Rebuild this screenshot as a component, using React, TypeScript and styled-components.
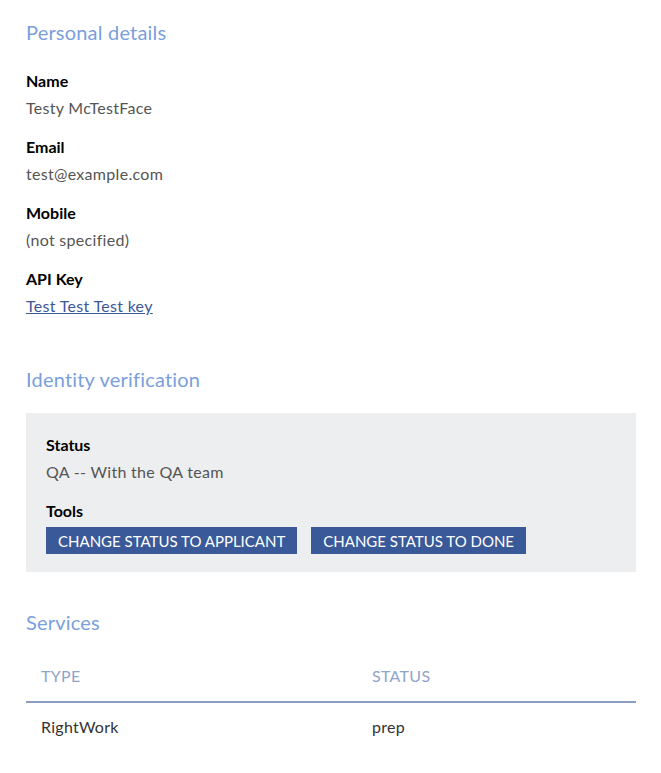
import React from 'react';
import styled, { createGlobalStyle } from 'styled-components';

const GlobalStyle = createGlobalStyle`
    body {
        margin: 0;
        background: #fff;
        font-family: Lato, "Open Sans", sans-serif;
        color: #555;
    }
`;

const Page = styled.div`
    padding: 20px 25px 40px 26px;
`;

const Section = styled.section<{ gapAfter?: number }>`
    margin-bottom: ${(p) => p.gapAfter ?? 0}px;
`;

const SectionTitle = styled.h2<{ spaceBelow: number }>`
    margin: 0 0 ${(p) => p.spaceBelow}px;
    font-size: 20px;
    line-height: 24px;
    font-weight: 400;
    letter-spacing: 0.2px;
    color: #7a9fdb;
`;

const Field = styled.div`
    margin-bottom: 12px;
`;

const Label = styled.div`
    font-size: 16px;
    line-height: 27px;
    font-weight: 700;
    color: #000;
`;

const Value = styled.div`
    font-size: 16px;
    line-height: 27px;
    letter-spacing: 0.3px;
    color: #555;
`;

const ValueLink = styled.a`
    font-size: 16px;
    line-height: 27px;
    letter-spacing: 0.3px;
    color: #3b5998;
    text-decoration: underline;
`;

const Panel = styled.div`
    background: #edeef0;
    padding: 18px 20px 18px;
`;

const ToolsRow = styled.div`
    display: flex;
    gap: 14px;
    margin-top: 3px;
`;

const Button = styled.button`
    height: 27px;
    padding: 0 12px;
    border: none;
    background: #3a5998;
    color: #fff;
    font-family: inherit;
    font-size: 15px;
    text-transform: uppercase;
    cursor: pointer;
`;

const Table = styled.table`
    width: 100%;
    margin-top: 16px;
    border-collapse: collapse;
    table-layout: fixed;
`;

const Th = styled.th<{ w?: number }>`
    width: ${(p) => (p.w ? `${p.w}px` : 'auto')};
    padding: 14px 15px 13px;
    text-align: left;
    font-size: 16px;
    line-height: 24px;
    font-weight: 400;
    text-transform: uppercase;
    letter-spacing: 0.3px;
    color: #8fa3cb;
    border-bottom: 2px solid #8a9dc2;
`;

const Td = styled.td`
    padding: 12px 15px;
    font-size: 16px;
    line-height: 24px;
    letter-spacing: 0.3px;
    color: #333;
`;

const personal = [
    { label: 'Name', value: 'Testy McTestFace' },
    { label: 'Email', value: 'test@example.com' },
    { label: 'Mobile', value: '(not specified)' },
];

export default function App() {
    return (
        <Page>
            <GlobalStyle />
            <Section gapAfter={48}>
                <SectionTitle spaceBelow={23}>Personal details</SectionTitle>
                {personal.map((f) => (
                    <Field key={f.label}>
                        <Label>{f.label}</Label>
                        <Value>{f.value}</Value>
                    </Field>
                ))}
                <Field>
                    <Label>API Key</Label>
                    <ValueLink href="#">Test Test Test key</ValueLink>
                </Field>
            </Section>

            <Section gapAfter={38}>
                <SectionTitle spaceBelow={22}>Identity verification</SectionTitle>
                <Panel>
                    <Field>
                        <Label>Status</Label>
                        <Value>QA -- With the QA team</Value>
                    </Field>
                    <Label>Tools</Label>
                    <ToolsRow>
                        <Button>Change status to applicant</Button>
                        <Button>Change status to done</Button>
                    </ToolsRow>
                </Panel>
            </Section>

            <Section>
                <SectionTitle spaceBelow={0}>Services</SectionTitle>
                <Table>
                    <thead>
                        <tr>
                            <Th w={301}>Type</Th>
                            <Th>Status</Th>
                        </tr>
                    </thead>
                    <tbody>
                        <tr>
                            <Td>RightWork</Td>
                            <Td>prep</Td>
                        </tr>
                    </tbody>
                </Table>
            </Section>
        </Page>
    );
}
